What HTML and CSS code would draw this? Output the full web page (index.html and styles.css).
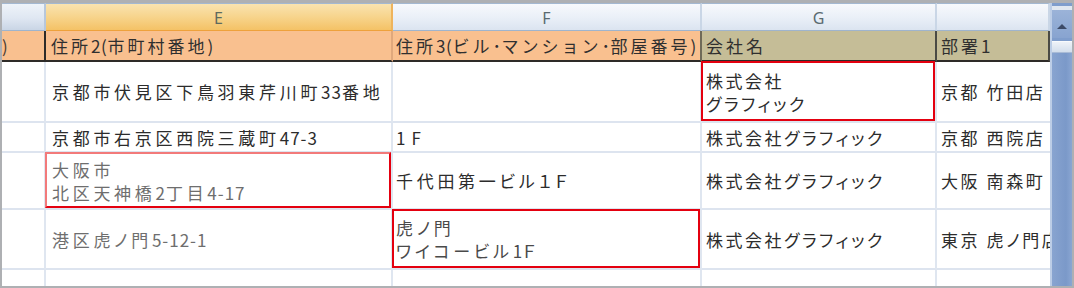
FILE: index.html
```html
<!DOCTYPE html>
<html lang="ja">
<head>
<meta charset="utf-8">
<title>Sheet</title>
<link rel="stylesheet" href="styles.css">
</head>
<body>
<div class="frame">
  <div class="sheet">
    <div class="ch corner"></div>
    <div class="ch sel">E</div>
    <div class="ch">F</div>
    <div class="ch">G</div>
    <div class="ch"></div>

    <div class="lb peach cd">)</div>
    <div class="lb peach ce">住所<span class="n">2(</span>市町村番地<span class="n">)</span></div>
    <div class="lb peach cf">住所<span class="n">3(</span>ビル<span class="n">･</span>マンション<span class="n">･</span>部屋番号<span class="n">)</span></div>
    <div class="lb khaki cg">会社名</div>
    <div class="lb khaki chh">部署<span class="n">1</span></div>

    <div class="c cd"></div>
    <div class="c ce">京都市伏見区下鳥羽東芹川町<span class="n">33</span>番地</div>
    <div class="c cf"></div>
    <div class="c cg hl"><div>株式会社<br>グラフィック</div></div>
    <div class="c chh">京都 竹田店</div>

    <div class="c cd"></div>
    <div class="c ce">京都市右京区西院三蔵町<span class="n">47-3</span></div>
    <div class="c cf"><span class="n f1">1F</span></div>
    <div class="c cg">株式会社グラフィック</div>
    <div class="c chh">京都 西院店</div>

    <div class="c cd"></div>
    <div class="c ce hl hl-soft light"><div>大阪市<br>北区天神橋<span class="n">2</span>丁目<span class="n">4-17</span></div></div>
    <div class="c cf">千代田第一ビル１Ｆ</div>
    <div class="c cg">株式会社グラフィック</div>
    <div class="c chh">大阪 南森町</div>

    <div class="c cd"></div>
    <div class="c ce light">港区虎ノ門<span class="n">5-12-1</span></div>
    <div class="c cf hl mid"><div>虎ノ門<br>ワイコービル<span class="n">1</span>Ｆ</div></div>
    <div class="c cg">株式会社グラフィック</div>
    <div class="c chh">東京 虎ノ門店</div>

    <div class="c cd last"></div>
    <div class="c ce last"></div>
    <div class="c cf last"></div>
    <div class="c cg last"></div>
    <div class="c chh last"></div>
  </div>
  <div class="scroll">
    <div class="sbtn"><span class="arrow"></span></div>
    <div class="thumb"></div>
    <div class="track"></div>
  </div>
</div>
</body>
</html>
```

FILE: styles.css
```css
html, body {
  margin: 0;
  padding: 0;
  background: #ffffff;
}

body {
  width: 1074px;
  height: 288px;
  overflow: hidden;
  font-family: "Noto Sans CJK JP", "Noto Sans", sans-serif;
}

.frame {
  box-sizing: border-box;
  width: 1074px;
  height: 288px;
  border-style: solid;
  border-color: #aeb0b3;
  border-width: 3px 2px 2px 2px;
  display: flex;
  overflow: hidden;
}

.sheet {
  flex: 0 0 1048px;
  display: grid;
  grid-template-columns: 44px 347px 309px 235px 113px;
  grid-template-rows: 28px 31px 61px 30px 57px 60px 1fr;
  overflow: hidden;
}

/* column headers */
.ch {
  box-sizing: border-box;
  border-top: 1px solid #a3b8d1;
  border-right: 2px solid #c9d6e6;
  border-bottom: 1px solid #9fb4cd;
  background: linear-gradient(#f7f9fc, #e9eff7 55%, #dbe4f0);
  color: #5a6a70;
  font-family: "Noto Sans", sans-serif;
  font-size: 16px;
  display: flex;
  align-items: center;
  justify-content: center;
  padding-top: 1px;
}

.ch.corner {
  background: linear-gradient(#eef3f9, #dfe7f2 55%, #c9d5e5);
  border-right-color: #b7c7db;
}

.ch.sel {
  background: linear-gradient(#f9e3b0, #f7d48c 50%, #f4c266);
  border-right-color: #efb45c;
  border-bottom: 1px solid #eea13c;
  color: #5e6a5e;
}

/* label row */
.lb {
  box-sizing: border-box;
  border-right: 2px solid #4a4a44;
  border-bottom: 2px solid #2e2b28;
  color: #2f2f2f;
  font-size: 17px;
  letter-spacing: 3px;
  white-space: nowrap;
  overflow: hidden;
  display: flex;
  align-items: center;
  padding-left: 3px;
}

.peach { background: #f9c08f; }
.khaki { background: #c5bd97; }

.lb.cd {
  padding-left: 0;
  color: #4a3a30;
  border-right-color: #2e2b28;
}

.lb.ce {
  padding-left: 5px;
  border-right: 2px solid #e0a87c;
}

.lb.cf { border-right-color: #6f6a58; }
.lb.cg { padding-left: 4px; }
.lb.chh { padding-left: 4px; }

/* data cells */
.c {
  box-sizing: border-box;
  border-right: 2px solid #dfe6f0;
  border-bottom: 2px solid #dde4ef;
  color: #2c2c2c;
  font-size: 17px;
  letter-spacing: 3.7px;
  font-feature-settings: "palt";
  line-height: 23px;
  white-space: nowrap;
  overflow: hidden;
  display: flex;
  align-items: center;
  padding-left: 3px;
}

.c.ce { padding-left: 6px; }
.c.cg { padding-left: 4px; letter-spacing: 2.5px; }
.c.chh { padding-left: 4px; border-right: none; letter-spacing: 2.6px; }
.c.last { border-bottom: none; }

.light { color: #6e6e6e; }
.mid { color: #4a4a4a; }

.n { letter-spacing: 0.6px; }
.c .n { letter-spacing: 1px; }
.c .f1 { letter-spacing: 6px; }

/* red highlight frames drawn over cell edges */
.hl {
  position: relative;
  overflow: visible;
  z-index: 1;
}

.hl::after {
  content: "";
  position: absolute;
  top: -1px;
  left: -1px;
  right: 0;
  bottom: 0;
  border: 2px solid #e4000f;
  pointer-events: none;
}

.hl-soft::after {
  border-top-color: #f27a7a;
  border-left-color: #f27a7a;
}

/* scrollbar */
.scroll {
  flex: 0 0 22px;
  box-sizing: border-box;
  background: #7f9dcc;
  border-left: 2px solid #bccde6;
  display: flex;
  flex-direction: column;
}

.sbtn {
  height: 32px;
  box-sizing: border-box;
  border-top: 4px solid #e0e7f0;
  margin-top: 3px;
  background: linear-gradient(#9bb3d8, #88a4d0);
  display: flex;
  align-items: center;
  justify-content: center;
  padding-top: 4px;
}

.arrow {
  width: 0;
  height: 0;
  border-left: 5px solid transparent;
  border-right: 5px solid transparent;
  border-bottom: 5px solid #3c4a66;
}

.thumb {
  height: 10px;
  margin-top: 3px;
  background: linear-gradient(#eef2f8, #d3deec);
  border-top: 1px solid #f8fafc;
  border-bottom: 1px solid #a9bbd6;
}

.track {
  flex: 1;
  background: linear-gradient(90deg, #88a4d0, #7b99c9 70%, #8aa6d2);
}
```
